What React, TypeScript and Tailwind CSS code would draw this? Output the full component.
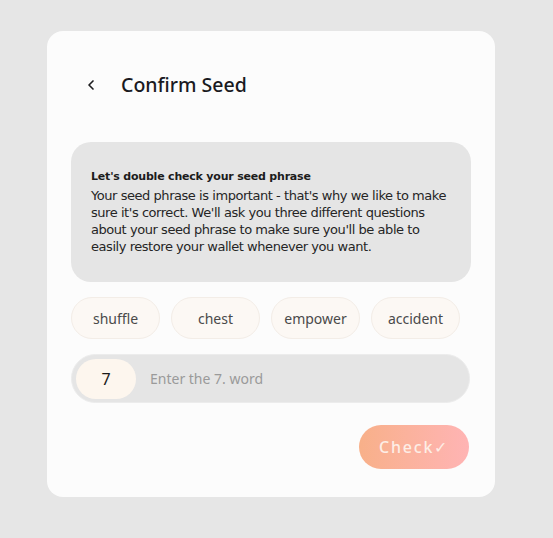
import { ChevronLeft } from 'lucide-react'

const WORDS = ['shuffle', 'chest', 'empower', 'accident']

export default function App() {
  return (
    <div className="min-h-[538px] w-full bg-[#e6e6e6] pt-[31px] pl-[47px]">
      <div className="w-[448px] h-[466px] rounded-[16px] bg-[#fcfcfc] px-[24px] pt-[29px] font-['Noto_Sans',sans-serif]">
        <div className="flex items-center h-[50px]">
          <ChevronLeft className="w-[16px] h-[16px] ml-[12px] text-[#1d1d1f]" strokeWidth={2.5} />
          <h1 className="ml-[22px] text-[19.5px] font-medium text-[#1a1a1f]">Confirm Seed</h1>
        </div>

        <div className="mt-[32px] rounded-[20px] bg-[#e5e5e5] h-[140px] pl-[20px] pr-[18px] pt-[28px] font-['DejaVu_Sans',sans-serif]">
          <p className="text-[11px] font-bold text-[#1c1c1c] leading-[14px] tracking-[-0.2px]">Let's double check your seed phrase</p>
          <p className="mt-[3px] text-[13px] text-[#252525] leading-[17px] tracking-[-0.45px]">
            Your seed phrase is important - that's why we like to make sure it's correct. We'll ask you three different questions about your seed phrase to make sure you'll be able to easily restore your wallet whenever you want.
          </p>
        </div>

        <div className="mt-[15px] flex gap-[11px]">
          {WORDS.map((w) => (
            <button
              key={w}
              type="button"
              className="w-[89px] h-[42px] rounded-full bg-[#fcf8f4] border border-[#f3ede7] text-[14px] text-[#4a4a4a]"
            >
              {w}
            </button>
          ))}
        </div>

        <div className="mt-[15px] w-[399px] h-[49px] rounded-full bg-[#e5e5e5] border border-[#ececec] flex items-center pl-[4px]">
          <div className="w-[60px] h-[40px] rounded-full bg-[#fdf6ee] flex items-center justify-center text-[16px] text-[#1a1a1a]">
            7
          </div>
          <input
            type="text"
            placeholder="Enter the 7. word"
            className="ml-[14px] flex-1 bg-transparent text-[14px] text-[#333] placeholder:text-[#9a9a9a] outline-none"
          />
        </div>

        <div className="mt-[22px] flex justify-end pr-[2px]">
          <button
            type="button"
            className="w-[110px] h-[44px] rounded-full bg-gradient-to-r from-[#f8b089] to-[#ffb4b4] text-[16px] font-medium tracking-[1.8px] text-[#fdeee6]"
          >
            Check✓
          </button>
        </div>
      </div>
    </div>
  )
}
